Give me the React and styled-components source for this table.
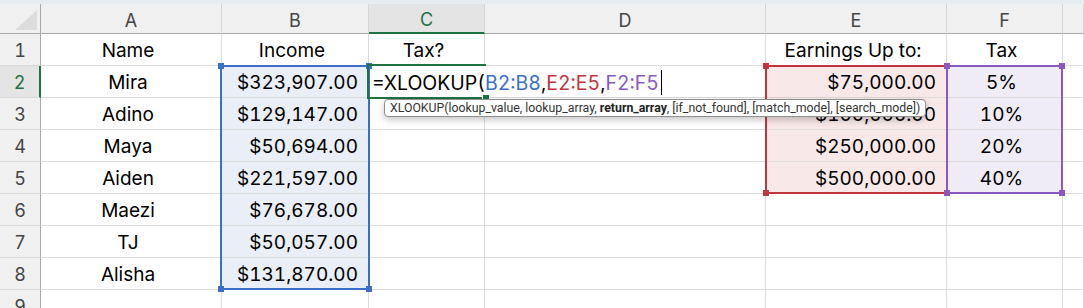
import React from 'react';
import styled, { createGlobalStyle, css } from 'styled-components';

const GlobalStyle = createGlobalStyle`
  html, body { margin: 0; padding: 0; background: #ffffff; overflow: hidden; }
  * { box-sizing: border-box; }
`;

const GRID = '#dcdcdc';
const HEAD_LINE = '#a9a9a9';
const GREEN = '#1f7244';
const BLUE = '#3a6fc8';
const RED = '#c1353f';
const PURPLE = '#8a58c0';
const TINTS = { blue: '#e9eef7', red: '#f8e8e8', purple: '#efecf6' };
const RANGE_COLORS = { blue: BLUE, red: RED, purple: PURPLE };

const Page = styled.div`
  width: 1084px;
  height: 308px;
  overflow: hidden;
  background: #fff;
`;

const TopStrip = styled.div`
  height: 4px;
  background: #e7ecf0;
`;

const Sheet = styled.div`
  display: grid;
  grid-template-columns: 41px 181px 147px 116px 281px 181px 116px 1fr;
  grid-template-rows: 30px repeat(9, 32px);
  font-family: Inter, "Liberation Sans", sans-serif;
  font-variant-numeric: tabular-nums;
`;

const place = css`
  grid-column: ${(p) => p.$col} / span ${(p) => p.$span || 1};
  grid-row: ${(p) => p.$row} / span ${(p) => p.$rows || 1};
`;

const Corner = styled.div`
  ${place};
  background: #f0f0f0;
  border-right: 1px solid ${HEAD_LINE};
  border-bottom: 1px solid ${HEAD_LINE};
  display: flex;
  align-items: flex-end;
  justify-content: flex-end;
  padding: 0 3px 3px 0;
`;

const CornerTriangle = styled.div`
  width: 22px;
  height: 20px;
  background: #dcdcdc;
  clip-path: polygon(100% 0, 100% 100%, 0 100%);
`;

const ColHeader = styled.div`
  ${place};
  display: flex;
  align-items: center;
  justify-content: center;
  padding-top: 3px;
  font-size: 18px;
  color: ${(p) => (p.$active ? GREEN : '#444')};
  background: ${(p) => (p.$active ? '#e4e4e4' : '#f0f0f0')};
  border-right: 1px solid #d6d6d6;
  border-bottom: ${(p) => (p.$active ? `2px solid ${GREEN}` : `1px solid ${HEAD_LINE}`)};
`;

const RowHeader = styled.div`
  ${place};
  display: flex;
  align-items: center;
  justify-content: center;
  padding-top: 2px;
  font-size: 18px;
  color: ${(p) => (p.$active ? GREEN : '#444')};
  background: ${(p) => (p.$active ? '#e4e4e4' : '#f0f0f0')};
  border-bottom: 1px solid #d9d9d9;
  border-right: ${(p) => (p.$active ? `2px solid ${GREEN}` : `1px solid ${HEAD_LINE}`)};
`;

const Cell = styled.div`
  ${place};
  display: flex;
  align-items: center;
  justify-content: ${(p) => (p.$align === 'right' ? 'flex-end' : p.$align === 'center' ? 'center' : 'flex-start')};
  padding: 2px 10px 0 4px;
  font-size: 19px;
  color: #000;
  white-space: nowrap;
  background: ${(p) => (p.$tint ? TINTS[p.$tint] : '#fff')};
  border-right: 1px solid ${GRID};
  border-bottom: 1px solid ${GRID};
`;

const EditCell = styled.div`
  ${place};
  position: relative;
  display: flex;
  align-items: center;
  padding: 2px 0 0 3px;
  font-size: 19.5px;
  color: #000;
  white-space: nowrap;
  background: #fff;
  border-right: 1px solid ${GRID};
  border-bottom: 1px solid ${GRID};
`;

const Ref = styled.span`
  color: ${(p) => RANGE_COLORS[p.$color]};
`;

const Caret = styled.span`
  display: inline-block;
  width: 1px;
  height: 25px;
  margin-left: 2px;
  background: #000;
`;

const RangeBox = styled.div`
  ${place};
  position: relative;
  z-index: 2;
  pointer-events: none;
  margin: -1px ${(p) => p.$mr}px 0 ${(p) => p.$ml}px;
  border: 2px solid ${(p) => RANGE_COLORS[p.$color]};
`;

const Handle = styled.span`
  position: absolute;
  width: 6px;
  height: 6px;
  background: ${(p) => RANGE_COLORS[p.$color]};
  ${(p) => (p.$v === 'top' ? 'top: -4px;' : 'bottom: -4px;')}
  ${(p) => (p.$h === 'left' ? 'left: -4px;' : 'right: -4px;')}
`;

const ActiveBox = styled.div`
  ${place};
  position: relative;
  z-index: 3;
  pointer-events: none;
  margin: -2px -1px -1px -2px;
  border: 2px solid ${GREEN};
  border-right: none;
`;

const FillHandle = styled.span`
  position: absolute;
  right: -4px;
  bottom: -5px;
  width: 8px;
  height: 8px;
  background: ${GREEN};
  border: 1px solid #fff;
`;

const Tooltip = styled.div`
  position: absolute;
  z-index: 10;
  left: 15px;
  top: calc(100% + 2px);
  height: 18px;
  display: flex;
  align-items: center;
  padding: 0 5px;
  font-family: Roboto, "Liberation Sans", sans-serif;
  font-variant-numeric: normal;
  font-size: 12.3px;
  color: #333;
  background: #fff;
  border: 1px solid #8f8f8f;
  border-radius: 4px;
  box-shadow: 0 3px 7px rgba(0, 0, 0, 0.22);
`;

const Bold = styled.b`
  font-weight: 700;
  color: #222;
`;

const COLS = ['A', 'B', 'C', 'D', 'E', 'F', ''];

const DATA = [
  ['Name', 'Income', 'Tax?', '', 'Earnings Up to:', 'Tax'],
  ['Mira', '$323,907.00', null, null, '$75,000.00', '5%'],
  ['Adino', '$129,147.00', '', '', '$100,000.00', '10%'],
  ['Maya', '$50,694.00', '', '', '$250,000.00', '20%'],
  ['Aiden', '$221,597.00', '', '', '$500,000.00', '40%'],
  ['Maezi', '$76,678.00', '', '', '', ''],
  ['TJ', '$50,057.00', '', '', '', ''],
  ['Alisha', '$131,870.00', '', '', '', ''],
  ['', '', '', '', '', ''],
];

const ALIGN = ['center', 'right', 'center', 'left', 'right', 'center'];

function tintFor(r, c) {
  if (c === 1 && r >= 1 && r <= 7) return 'blue';
  if (c === 4 && r >= 1 && r <= 4) return 'red';
  if (c === 5 && r >= 1 && r <= 4) return 'purple';
  return null;
}

const CORNERS = [
  ['top', 'left'],
  ['top', 'right'],
  ['bottom', 'left'],
  ['bottom', 'right'],
];

function Range({ col, row, rows, color, ml, mr }) {
  return (
    <RangeBox $col={col} $row={row} $rows={rows} $color={color} $ml={ml} $mr={mr}>
      {CORNERS.map(([v, h]) => (
        <Handle key={v + h} $v={v} $h={h} $color={color} />
      ))}
    </RangeBox>
  );
}

export default function App() {
  const cells = [];
  DATA.forEach((row, r) => {
    const gridRow = r + 2;
    cells.push(
      <RowHeader key={`rh${r}`} $col={1} $row={gridRow} $active={r === 1}>
        {r + 1}
      </RowHeader>
    );
    row.forEach((val, c) => {
      if (val === null) return;
      const align = r === 0 ? 'center' : ALIGN[c];
      cells.push(
        <Cell key={`c${r}-${c}`} $col={c + 2} $row={gridRow} $align={align} $tint={tintFor(r, c)}>
          {val}
        </Cell>
      );
    });
    cells.push(<Cell key={`g${r}`} $col={8} $row={gridRow} />);
  });

  return (
    <Page>
      <GlobalStyle />
      <TopStrip />
      <Sheet>
        <Corner $col={1} $row={1}>
          <CornerTriangle />
        </Corner>
        {COLS.map((l, i) => (
          <ColHeader key={`h${i}`} $col={i + 2} $row={1} $active={l === 'C'}>
            {l}
          </ColHeader>
        ))}
        {cells}
        <EditCell $col={4} $row={3} $span={2}>
          =XLOOKUP(<Ref $color="blue">B2:B8</Ref>,<Ref $color="red">E2:E5</Ref>,<Ref $color="purple">F2:F5</Ref>
          <Caret />
          <Tooltip>
            XLOOKUP(lookup_value, lookup_array,&nbsp;<Bold>return_array</Bold>, [if_not_found], [match_mode], [search_mode])
          </Tooltip>
        </EditCell>
        <Range col={3} row={3} rows={7} color="blue" ml={-2} mr={-1} />
        <Range col={6} row={3} rows={4} color="red" ml={-1} mr={-1} />
        <Range col={7} row={3} rows={4} color="purple" ml={-1} mr={0} />
        <ActiveBox $col={4} $row={3}>
          <FillHandle />
        </ActiveBox>
      </Sheet>
    </Page>
  );
}
